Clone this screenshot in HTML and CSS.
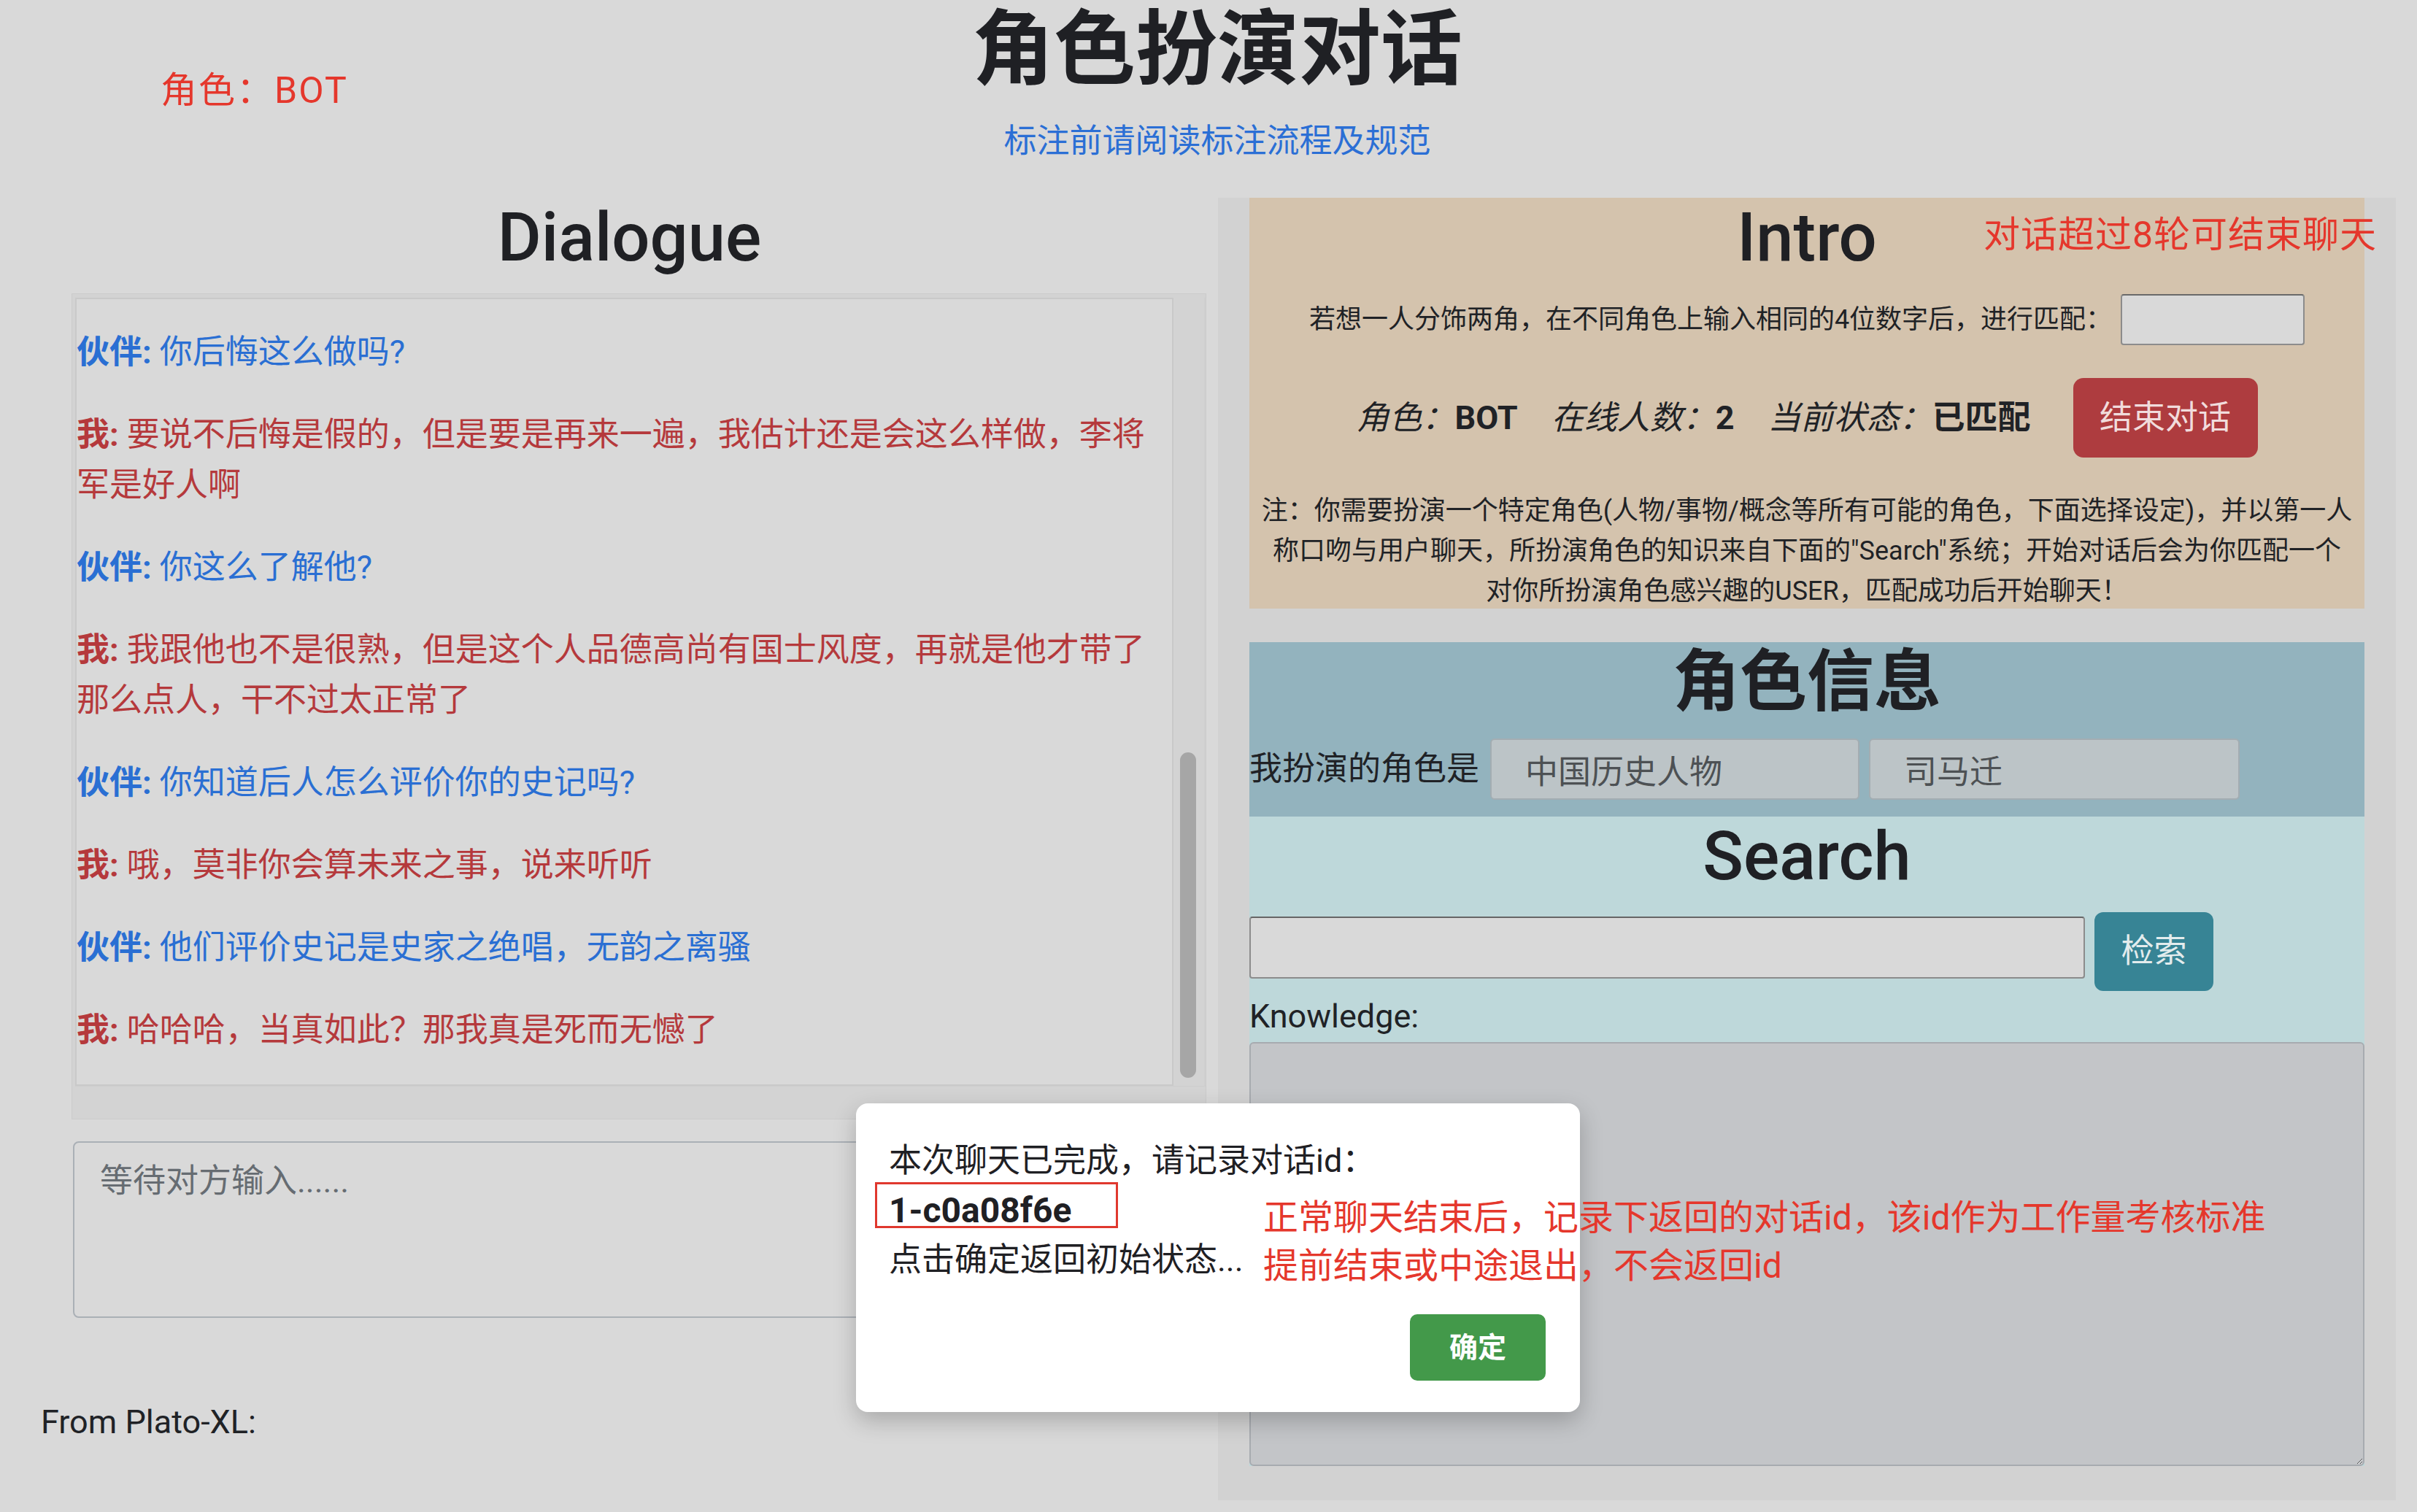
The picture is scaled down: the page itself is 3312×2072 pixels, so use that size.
FILE: index.html
```html
<!DOCTYPE html>
<html lang="zh-CN">
<head>
<meta charset="utf-8">
<title>角色扮演对话</title>
<link rel="stylesheet" href="styles.css">
</head>
<body>
<div class="page">
  <header class="masthead">
    <h1 class="title">角色扮演对话</h1>
    <a class="guide" href="#">标注前请阅读标注流程及规范</a>
  </header>

  <main class="layout">
    <section class="dialogue-col">
      <h2 class="panel-title">Dialogue</h2>
      <div class="chat-frame">
        <div class="chat-log">
          <p class="msg partner"><b>伙伴:</b> 你后悔这么做吗?</p>
          <p class="msg me"><b>我:</b> 要说不后悔是假的，但是要是再来一遍，我估计还是会这么样做，李将军是好人啊</p>
          <p class="msg partner"><b>伙伴:</b> 你这么了解他?</p>
          <p class="msg me"><b>我:</b> 我跟他也不是很熟，但是这个人品德高尚有国士风度，再就是他才带了那么点人，干不过太正常了</p>
          <p class="msg partner"><b>伙伴:</b> 你知道后人怎么评价你的史记吗?</p>
          <p class="msg me"><b>我:</b> 哦，莫非你会算未来之事，说来听听</p>
          <p class="msg partner"><b>伙伴:</b> 他们评价史记是史家之绝唱，无韵之离骚</p>
          <p class="msg me"><b>我:</b> 哈哈哈，当真如此？那我真是死而无憾了</p>
        </div>
        <div class="vtrack"><div class="thumb"></div></div>
        <div class="htrack"></div>
      </div>
      <textarea class="reply" placeholder="等待对方输入......"></textarea>
      <p class="source">From Plato-XL:</p>
    </section>

    <aside class="side-col">
      <section class="intro">
        <h2 class="panel-title">Intro</h2>
        <div class="match-row">
          <span>若想一人分饰两角，在不同角色上输入相同的4位数字后，进行匹配：</span>
          <input class="match-code" type="text">
        </div>
        <div class="status-row">
          <span class="stat"><i>角色：</i><b>BOT</b></span>
          <span class="stat"><i>在线人数：</i><b>2</b></span>
          <span class="stat"><i>当前状态：</i><b>已匹配</b></span>
          <button class="btn btn-end" type="button">结束对话</button>
        </div>
        <p class="note">注：你需要扮演一个特定角色(人物/事物/概念等所有可能的角色，下面选择设定)，并以第一人<br>称口吻与用户聊天，所扮演角色的知识来自下面的"Search"系统；开始对话后会为你匹配一个<br>对你所扮演角色感兴趣的USER，匹配成功后开始聊天！</p>
      </section>

      <section class="role-info">
        <h2 class="cn-title">角色信息</h2>
        <div class="role-row">
          <label class="role-label">我扮演的角色是</label>
          <input class="role-field" type="text" value="中国历史人物" disabled>
          <input class="role-field" type="text" value="司马迁" disabled>
        </div>
      </section>

      <section class="search">
        <h2 class="panel-title">Search</h2>
        <div class="search-row">
          <input class="search-input" type="text">
          <button class="btn btn-search" type="button">检索</button>
        </div>
        <label class="k-label">Knowledge:</label>
        <textarea class="knowledge"></textarea>
      </section>
    </aside>
  </main>

  <div class="modal">
    <p class="modal-line">本次聊天已完成，请记录对话id：</p>
    <p class="modal-line modal-id">1-c0a08f6e</p>
    <p class="modal-line">点击确定返回初始状态...</p>
    <div class="modal-actions"><button class="btn btn-ok" type="button">确定</button></div>
    <div class="mark-box"></div>
  </div>

  <div class="note-red note-role">角色：BOT</div>
  <div class="note-red note-rounds">对话超过8轮可结束聊天</div>
  <div class="note-red note-id">正常聊天结束后，记录下返回的对话id，该id作为工作量考核标准<br>提前结束或中途退出，不会返回id</div>
</div>
</body>
</html>
```

FILE: styles.css
```css
* { box-sizing: border-box; }

html, body {
  margin: 0;
  padding: 0;
}

body {
  background: #d9d9d9;
  color: #202226;
  font-family: Roboto, "Noto Sans CJK SC", sans-serif;
  font-size: 45px;
}

.page {
  position: relative;
  width: 3312px;
  min-height: 2072px;
}

/* ---------- header ---------- */
.masthead {
  height: 271px;
  padding-left: 24px;
  display: flex;
  flex-direction: column;
  align-items: center;
}

.title {
  margin: 2px 0 0;
  font-size: 112px;
  line-height: 134px;
  font-weight: 700;
  color: #1f2024;
}

.guide {
  margin-top: 28px;
  font-size: 45px;
  line-height: 60px;
  color: #2b6fd5;
  text-decoration: none;
}

/* ---------- main layout ---------- */
.layout {
  display: grid;
  grid-template-columns: 1613px 1614px;
  padding-left: 56px;
}

.panel-title {
  margin: 0;
  font-family: Roboto, "Noto Sans CJK SC", sans-serif;
  font-weight: 500;
  font-size: 92px;
  line-height: 110px;
  text-align: center;
  color: #1f2024;
}

/* ---------- dialogue column ---------- */
.dialogue-col {
  display: flex;
  flex-direction: column;
}

.chat-frame {
  margin: 21px 0 0 42px;
  width: 1555px;
  height: 1132px;
  background: #d3d3d3;
  border: 1px solid #cbcbcb;
  padding: 5px 0 0 4px;
  display: grid;
  grid-template-columns: 1505px 1fr;
  grid-template-rows: 1080px 1fr;
}

.chat-log {
  border: 2px solid #c9c9c9;
  background: #d9d9d9;
  overflow: hidden;
  padding-top: 38px;
}

.msg {
  margin: 0 0 44px;
  font-size: 45px;
  line-height: 69px;
}

.msg b { font-weight: 700; }

.partner { color: #2a6fd3; }
.me { color: #b5393c; }

.vtrack {
  padding: 623px 0 0 9px;
  border-right: 2px solid #cfcfcf;
}

.thumb {
  width: 22px;
  height: 446px;
  border-radius: 11px;
  background: #a6a6a6;
}

.htrack {
  grid-column: 1 / 3;
  border-top: 1px solid #cdcdcd;
}

.reply {
  display: block;
  margin: 30px 0 0 44px;
  width: 1553px;
  height: 242px;
  border: 2px solid #aab0b6;
  border-radius: 8px;
  background: #d9d9d9;
  padding: 26px 35px;
  font-family: Roboto, "Noto Sans CJK SC", sans-serif;
  font-size: 45px;
  line-height: 54px;
  resize: none;
  color: #202226;
}

.reply::placeholder { color: #666c72; }

.source {
  margin: 116px 0 0;
  font-size: 45px;
  line-height: 54px;
}

/* ---------- side column ---------- */
.side-col {
  background: #d2d2d2;
  padding: 0 43px 47px;
  display: flex;
  flex-direction: column;
}

.intro {
  background: #d4c3ad;
  display: flex;
  flex-direction: column;
  align-items: center;
}

.match-row {
  margin-top: 22px;
  display: flex;
  align-items: center;
  gap: 12px;
  font-size: 36px;
  line-height: 44px;
}

.match-code {
  width: 252px;
  height: 70px;
  border: 2px solid #8c8c8c;
  border-top-color: #6a6a6a;
  border-radius: 4px;
  background: #d9d9d9;
}

.status-row {
  margin-top: 45px;
  display: flex;
  align-items: center;
  font-size: 45px;
  line-height: 54px;
}

.stat i { font-style: italic; }
.stat b { font-weight: 700; }
.stat + .stat { margin-left: 46px; }

.btn {
  border: none;
  font-family: Roboto, "Noto Sans CJK SC", sans-serif;
  font-size: 45px;
  line-height: 54px;
  cursor: pointer;
}

.btn-end {
  margin-left: 58px;
  width: 253px;
  height: 109px;
  border-radius: 14px;
  background: #ae3c3f;
  color: #f1dcdc;
}

.note {
  margin: 46px 16px 0;
  font-size: 36px;
  line-height: 55px;
  text-align: center;
  height: 161px;
}

.role-info {
  margin-top: 46px;
  background: #93b3be;
  padding-bottom: 23px;
}

.cn-title {
  margin: 0;
  font-size: 92px;
  line-height: 110px;
  font-weight: 700;
  text-align: center;
  color: #1f2024;
}

.role-row {
  margin-top: 22px;
  display: flex;
  align-items: center;
}

.role-label {
  font-size: 45px;
  line-height: 54px;
  margin-right: 15px;
}

.role-field {
  width: 506px;
  height: 84px;
  border: 2px solid #a3adb2;
  border-radius: 6px;
  background: #bcc4c7;
  padding: 0 20px 0 46px;
  font-family: Roboto, "Noto Sans CJK SC", sans-serif;
  font-size: 45px;
  color: #4d5154;
}

.role-field + .role-field { margin-left: 13px; width: 508px; }

.search {
  background: #bed8da;
  display: flex;
  flex-direction: column;
}

.search-row {
  margin-top: 21px;
  display: flex;
  align-items: flex-start;
}

.search-input {
  margin-top: 6px;
  width: 1145px;
  height: 85px;
  border: 2px solid #8c8c8c;
  border-top-color: #666;
  border-radius: 4px;
  background: #d9d9d9;
}

.btn-search {
  margin-left: 13px;
  width: 163px;
  height: 108px;
  border-radius: 12px;
  background: #378495;
  color: #e3eced;
}

.k-label {
  margin-top: 8px;
  font-size: 45px;
  line-height: 54px;
}

.knowledge {
  display: block;
  margin-top: 8px;
  width: 100%;
  height: 581px;
  border: 2px solid #a7abb0;
  border-radius: 6px;
  background: #c3c5c8;
  font-family: Roboto, "Noto Sans CJK SC", sans-serif;
}

/* ---------- modal ---------- */
.modal {
  position: absolute;
  left: 1173px;
  top: 1512px;
  width: 992px;
  height: 423px;
  background: #ffffff;
  border-radius: 16px;
  box-shadow: 0 12px 32px rgba(0, 0, 0, 0.22);
  padding: 45px 47px 42px 45px;
  display: flex;
  flex-direction: column;
  color: #1f2024;
}

.modal-line {
  margin: 0;
  font-size: 45px;
  line-height: 68px;
}

.modal-id {
  font-weight: 700;
  font-size: 48px;
}

.modal-actions {
  margin-top: 40px;
  display: flex;
  justify-content: flex-end;
}

.btn-ok {
  width: 186px;
  height: 91px;
  border-radius: 10px;
  background: #43994a;
  color: #ffffff;
  font-size: 39px;
  font-weight: 700;
}

.mark-box {
  position: absolute;
  left: 26px;
  top: 108px;
  width: 333px;
  height: 63px;
  border: 3px solid #e0382e;
}

/* ---------- red annotations ---------- */
.note-red {
  position: absolute;
  color: #e5372c;
  font-size: 48px;
  line-height: 66px;
  white-space: nowrap;
}

.note-role {
  left: 220px;
  top: 94px;
  font-size: 50px;
  line-height: 60px;
  letter-spacing: 2px;
}

.note-rounds {
  left: 2718px;
  top: 292px;
  font-size: 50px;
  line-height: 60px;
  letter-spacing: 1px;
}

.note-id {
  left: 1731px;
  top: 1636px;
}
```
